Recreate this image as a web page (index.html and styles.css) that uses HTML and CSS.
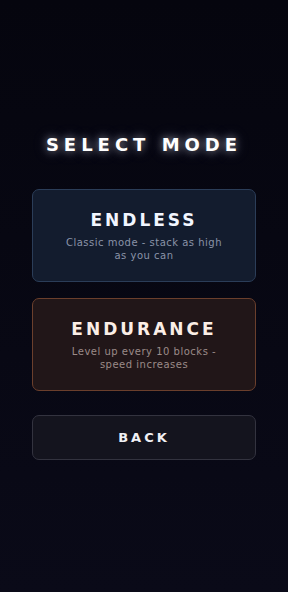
FILE: index.html
```html
<!DOCTYPE html>
<html lang="en">

<head>
  <meta charset="UTF-8">
  <meta name="viewport" content="width=device-width, initial-scale=1.0">
  <title>Select Mode</title>
  <link rel="stylesheet" href="styles.css">
</head>

<body>
  <main class="menu">
    <h1 class="title">SELECT MODE</h1>

    <div class="modes">
      <button class="mode endless">
        <span class="mode-name">ENDLESS</span>
        <span class="mode-desc">Classic mode - stack as high as you can</span>
      </button>

      <button class="mode endurance">
        <span class="mode-name">ENDURANCE</span>
        <span class="mode-desc">Level up every 10 blocks - speed increases</span>
      </button>
    </div>

    <button class="back-button">BACK</button>
  </main>
</body>

</html>
```

FILE: styles.css
```css
*,
*::before,
*::after {
  box-sizing: border-box;
}

body {
  font-family: 'DejaVu Sans', 'Liberation Sans', sans-serif;
  background: linear-gradient(180deg, #05050e 0%, #0a0a18 100%);
  color: #fff;
  margin: 0;
  min-height: 100vh;
}

.menu {
  min-height: 100vh;
  display: flex;
  flex-direction: column;
  justify-content: center;
  padding: 0 32px;
}

.title {
  margin: 0 0 32px;
  text-align: center;
  font-size: 18px;
  font-weight: 700;
  letter-spacing: 5px;
  line-height: 24px;
  color: #fff;
  text-shadow: 0 0 8px rgba(255, 255, 255, .55), 0 0 16px rgba(180, 190, 255, .25);
}

.modes {
  display: flex;
  flex-direction: column;
  gap: 16px;
}

.mode {
  font-family: inherit;
  display: flex;
  flex-direction: column;
  align-items: center;
  gap: 5px;
  height: 93px;
  justify-content: center;
  padding: 0 20px;
  border-radius: 7px;
  border: 1.5px solid;
  cursor: pointer;

  .mode-name {
    font-size: 17px;
    font-weight: 700;
    letter-spacing: 3px;
    line-height: 22px;
  }

  .mode-desc {
    font-size: 10px;
    letter-spacing: .5px;
    line-height: 13px;
    max-width: 165px;
    text-align: center;
  }
}

.endless {
  background: #131c2e;
  border-color: #2b3d58;

  .mode-name {
    color: #f2f6ff;
  }

  .mode-desc {
    color: #8a93a8;
  }
}

.endurance {
  background: #211618;
  border-color: #6b3f2c;

  .mode-name {
    color: #fbeee6;
  }

  .mode-desc {
    color: #9b8b88;
  }
}

.back-button {
  font-family: inherit;
  margin-top: 24px;
  height: 45px;
  border-radius: 7px;
  background: #14141e;
  border: 1.5px solid #33333f;
  color: #f0f0f5;
  font-size: 13px;
  font-weight: 700;
  letter-spacing: 3px;
  cursor: pointer;
}
```
